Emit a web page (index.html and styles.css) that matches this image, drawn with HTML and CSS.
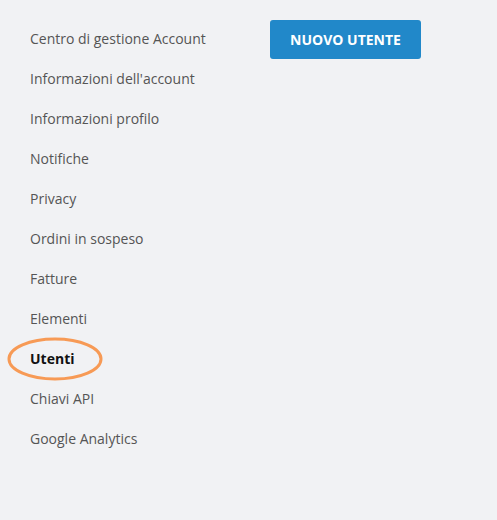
FILE: index.html
```html
<!doctype html>
<html>
  <head>
    <meta charset="utf-8">
    <title>Utenti</title>
    <link rel="stylesheet" href="styles.css">
  </head>
  <body>
    <div class="page">
      <ul class="menu">
        <li><a href="#">Centro di gestione Account</a></li>
        <li><a href="#">Informazioni dell'account</a></li>
        <li><a href="#">Informazioni profilo</a></li>
        <li><a href="#">Notifiche</a></li>
        <li><a href="#">Privacy</a></li>
        <li><a href="#">Ordini in sospeso</a></li>
        <li><a href="#">Fatture</a></li>
        <li><a href="#">Elementi</a></li>
        <li class="active"><a href="#">Utenti</a>
          <svg class="circle" width="98" height="46" viewBox="0 0 98 46">
            <ellipse cx="49" cy="23" rx="46" ry="20" fill="none" stroke="#f79a55" stroke-width="3"/>
          </svg>
        </li>
        <li><a href="#">Chiavi API</a></li>
        <li><a href="#">Google Analytics</a></li>
      </ul>
      <div class="main">
        <button class="button">NUOVO UTENTE</button>
      </div>
    </div>
  </body>
</html>
```

FILE: styles.css
```css
html,
body {
  margin: 0;
  padding: 0;
  height: 100%;
  background: #f1f2f4;
  font-family: "Open Sans", "Noto Sans", sans-serif;
}
.page {
  display: flex;
  padding: 19px 0 0 30px;
}
.menu {
  list-style: none;
  margin: 0;
  padding: 0;
  width: 240px;
}
.menu li {
  position: relative;
  height: 40px;
  line-height: 40px;
  font-size: 14px;
}
.menu a {
  color: #555;
  text-decoration: none;
}
.menu .active a {
  color: #111;
  font-weight: bold;
}
.circle {
  position: absolute;
  left: -24px;
  top: -3px;
}
.main {
  padding-top: 1px;
}
.button {
  background: #2188c9;
  color: #fff;
  border: none;
  border-radius: 3px;
  width: 151px;
  height: 39px;
  font-family: inherit;
  font-size: 14px;
  font-weight: bold;
  cursor: pointer;
}
```
